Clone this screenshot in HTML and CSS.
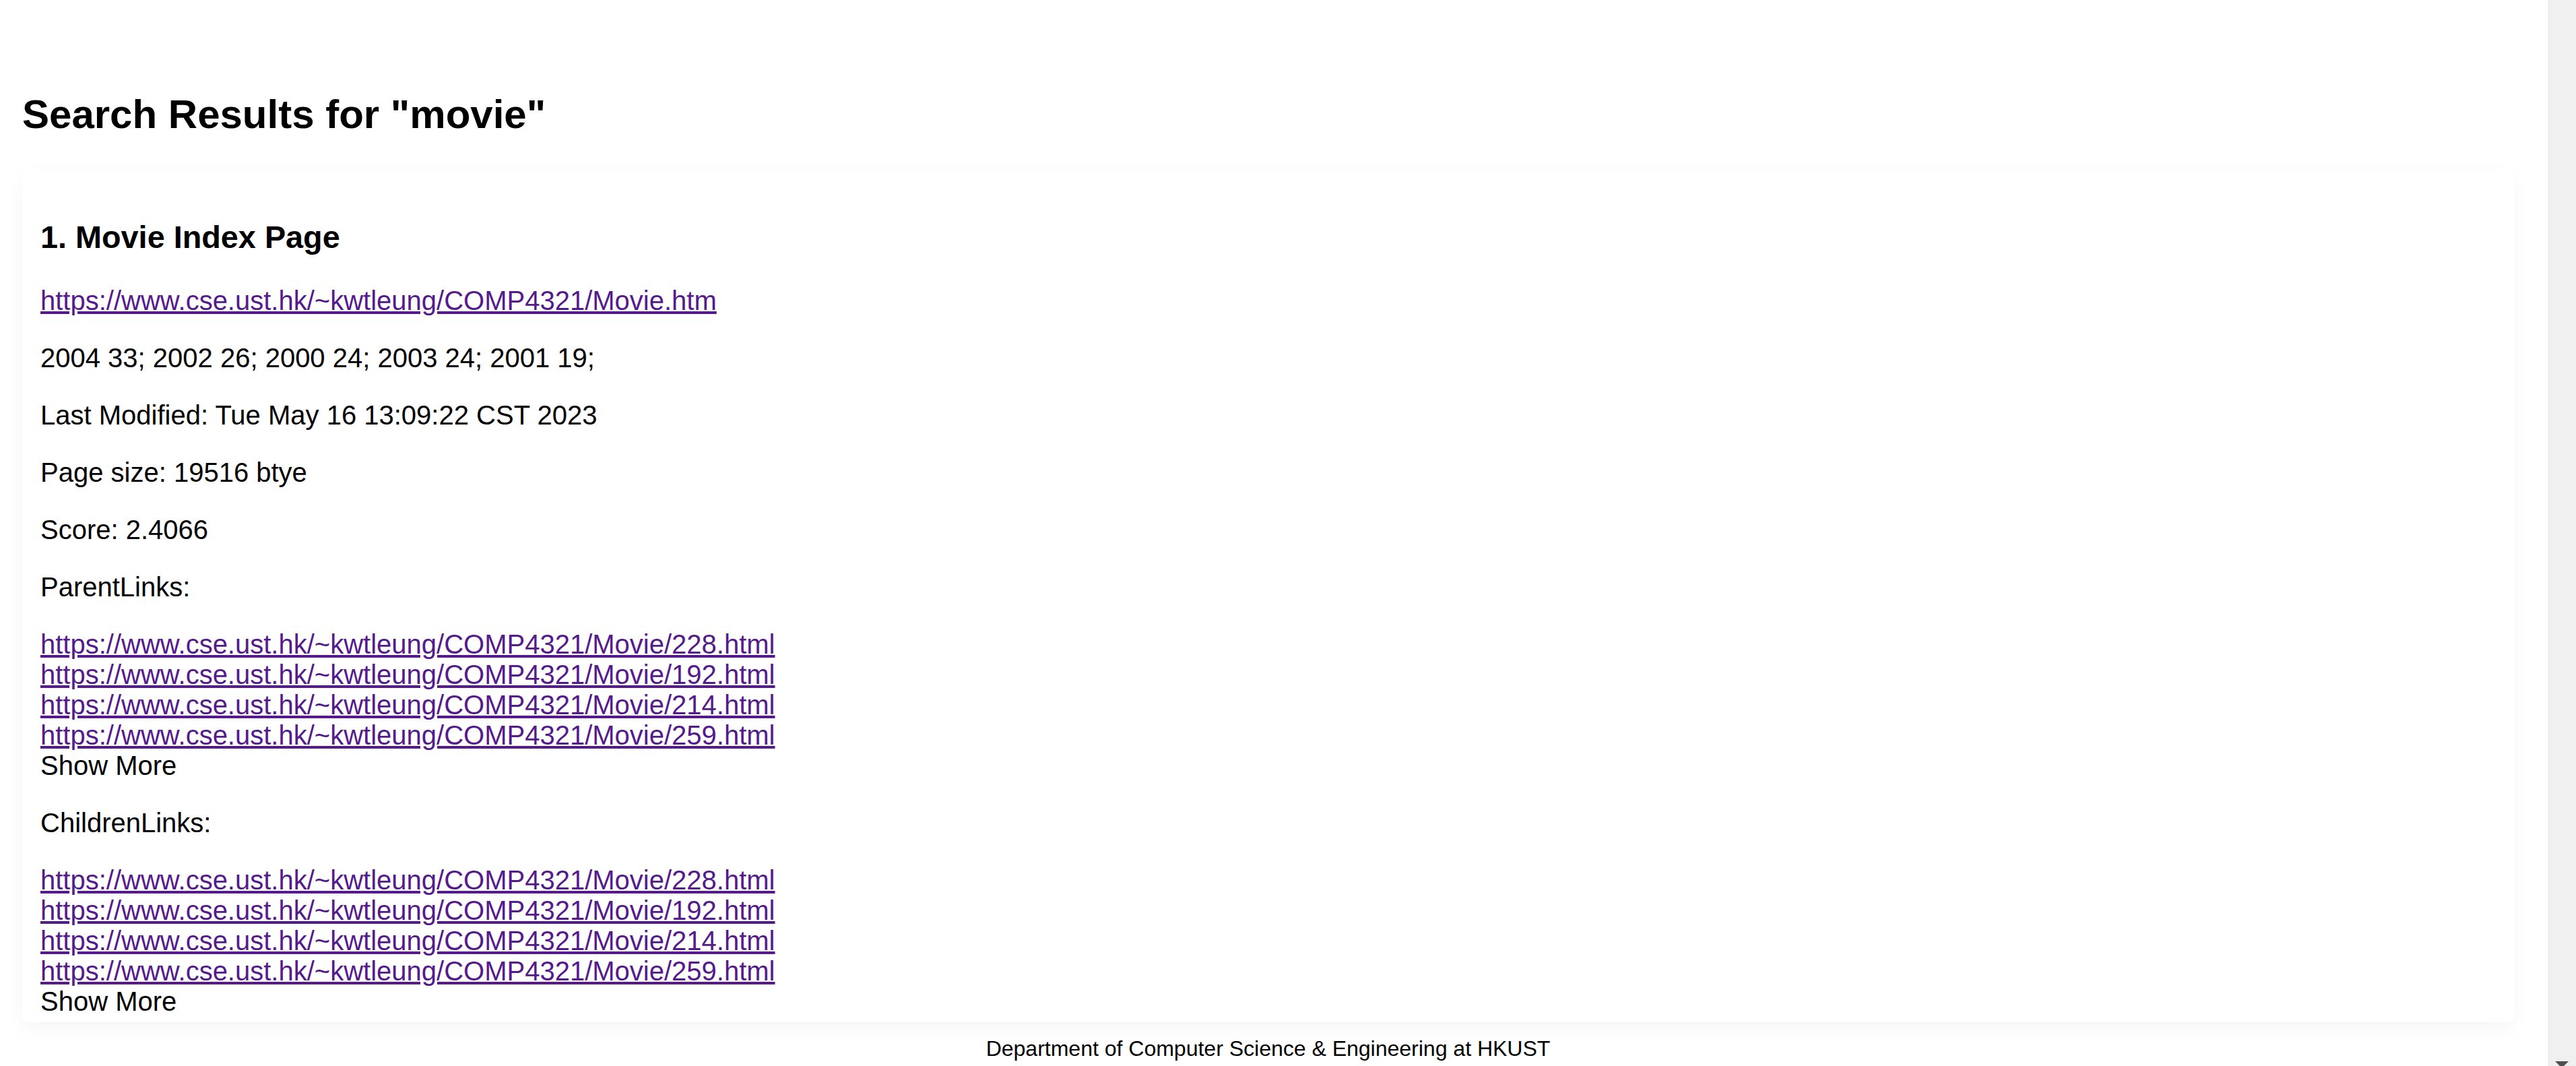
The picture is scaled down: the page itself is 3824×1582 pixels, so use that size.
FILE: index.html
```html
<!DOCTYPE html>
<html lang="en">
<head>
    <meta charset="UTF-8">
    <meta name="viewport" content="width=device-width, initial-scale=1.0">
    <title>Search Results</title>
    <link rel="stylesheet" href="styles.css">
</head>
<body>
    <div class="layout">
        <div class="page">
            <h2 class="title">Search Results for "movie"</h2>

            <div class="result">
                <h3>1. Movie Index Page</h3>
                <p><a href="#">https://www.cse.ust.hk/~kwtleung/COMP4321/Movie.htm</a></p>
                <p>2004 33; 2002 26; 2000 24; 2003 24; 2001 19;</p>
                <p>Last Modified: Tue May 16 13:09:22 CST 2023</p>
                <p>Page size: 19516 btye</p>
                <p>Score: 2.4066</p>

                <p>ParentLinks:</p>
                <div class="links">
                    <a href="#">https://www.cse.ust.hk/~kwtleung/COMP4321/Movie/228.html</a><br>
                    <a href="#">https://www.cse.ust.hk/~kwtleung/COMP4321/Movie/192.html</a><br>
                    <a href="#">https://www.cse.ust.hk/~kwtleung/COMP4321/Movie/214.html</a><br>
                    <a href="#">https://www.cse.ust.hk/~kwtleung/COMP4321/Movie/259.html</a>
                </div>
                <div class="show-more">Show More</div>

                <p>ChildrenLinks:</p>
                <div class="links">
                    <a href="#">https://www.cse.ust.hk/~kwtleung/COMP4321/Movie/228.html</a><br>
                    <a href="#">https://www.cse.ust.hk/~kwtleung/COMP4321/Movie/192.html</a><br>
                    <a href="#">https://www.cse.ust.hk/~kwtleung/COMP4321/Movie/214.html</a><br>
                    <a href="#">https://www.cse.ust.hk/~kwtleung/COMP4321/Movie/259.html</a>
                </div>
                <div class="show-more">Show More</div>
            </div>

            <footer class="footer">Department of Computer Science &amp; Engineering at HKUST</footer>
        </div>

        <div class="scrollbar">
            <span class="arrow-down"></span>
        </div>
    </div>
</body>
</html>
```

FILE: styles.css
```css
html, body {
    margin: 0;
    height: 100%;
    overflow: hidden;
}
body {
    font-family: 'Liberation Sans', Arial, sans-serif;
    background-color: #fff;
    color: #000;
}
.layout {
    display: flex;
    height: 100vh;
}
.page {
    flex: 1;
    padding: 135px 50px 0 33px;
}
.title {
    font-size: 60px;
    line-height: 69px;
    margin: 0 0 48px;
}
.result {
    background-color: white;
    border-radius: 10px;
    box-shadow: 0 10px 30px rgba(0, 0, 0, 0.04);
    padding: 27px 27px 8px;
}
.result h3 {
    font-size: 46.8px;
    line-height: 54px;
    margin: 46px 0 45px;
}
.result p {
    font-size: 40px;
    line-height: 45px;
    margin: 40px 0;
}
.links, .show-more {
    font-size: 40px;
    line-height: 45px;
}
.show-more {
    cursor: pointer;
}
a {
    color: #551a8b;
}
.footer {
    text-align: center;
    font-size: 32px;
    line-height: 37px;
    padding-top: 21px;
}
.scrollbar {
    width: 42px;
    background-color: #f0f0f0;
    display: flex;
    flex-direction: column;
    justify-content: flex-end;
    align-items: center;
    overflow: hidden;
}
.arrow-down {
    width: 0;
    height: 0;
    border-left: 10px solid transparent;
    border-right: 10px solid transparent;
    border-top: 10px solid #505050;
    margin-bottom: -3px;
}
```
